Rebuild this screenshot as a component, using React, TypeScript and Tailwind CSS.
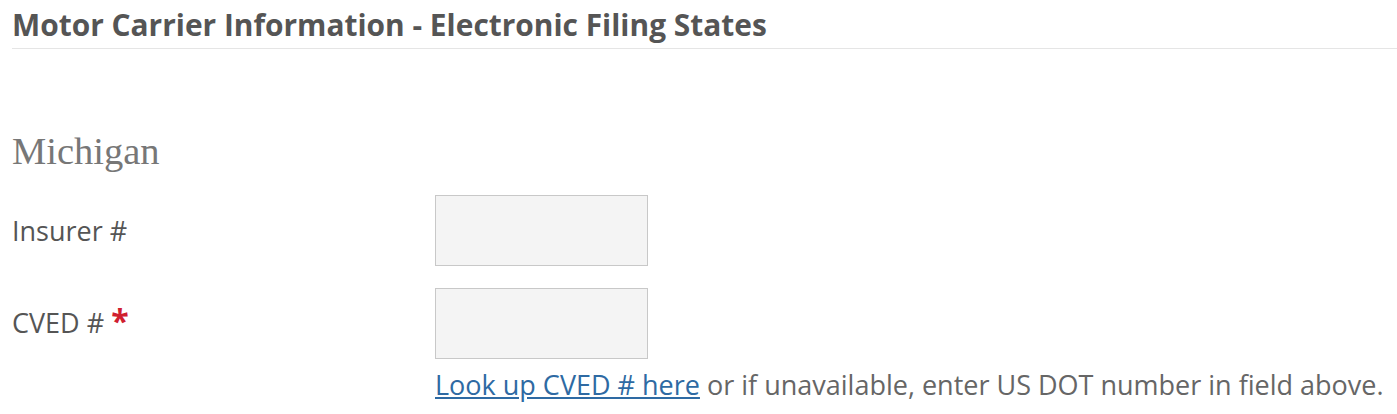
export default function App() {
  return (
    <div className="bg-white w-[1397px] h-[414px] overflow-hidden pl-[12px] text-[#555]" style={{ fontFamily: '"Open Sans", sans-serif' }}>
      <div className="border-b border-[#e5e5e5] pt-[6px] pb-[4px]">
        <h1 className="text-[29.9px] leading-[38px] font-bold text-[#555]">Motor Carrier Information - Electronic Filing States</h1>
      </div>
      <h2 className="mt-[80px] text-[38.5px] leading-[44px] text-[#777]" style={{ fontFamily: '"Liberation Serif", Georgia, serif' }}>Michigan</h2>
      <div className="mt-[22px] flex items-center">
        <label className="w-[423px] text-[27px] leading-[32px]">Insurer #</label>
        <input className="w-[213px] h-[71px] bg-[#f4f4f4] border border-[#c8c8c8] outline-none" />
      </div>
      <div className="mt-[22px] flex items-start">
        <label className="w-[423px] text-[27px] leading-[32px] pt-[19px]">
          CVED # <span className="text-[#d0202f] font-bold text-[32px] leading-[20px]">*</span>
        </label>
        <div>
          <input className="w-[213px] h-[71px] bg-[#f4f4f4] border border-[#c8c8c8] outline-none block" />
          <p className="text-[27px] leading-[32px] mt-[10px] text-[#666] whitespace-nowrap">
            <a href="#" className="text-[#2e6aa3] underline">Look up CVED # here</a> or if unavailable, enter US DOT number in field above.
          </p>
        </div>
      </div>
    </div>
  );
}
